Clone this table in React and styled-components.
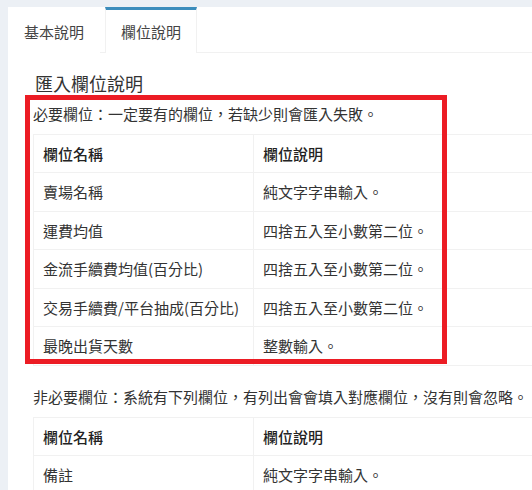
import React, { useState } from 'react';
import styled, { createGlobalStyle } from 'styled-components';

const GlobalStyle = createGlobalStyle`
  html, body {
    margin: 0;
    padding: 0;
    background: #ecf0f5;
  }
  body {
    font-family: "Noto Sans CJK TC", "Noto Sans", sans-serif;
    color: #333;
  }
`;

// the panel is wider than the window, so the page clips it at the edge
const Page = styled.div`
  box-sizing: border-box;
  width: 532px;
  height: 490px;
  overflow: hidden;
  padding: 7px 0 0 8px;
`;

const Panel = styled.div`
  width: 600px;
  min-height: 483px;
  background: #fff;
`;

const TabBar = styled.ul`
  display: flex;
  margin: 0;
  padding: 0;
  list-style: none;
  border-bottom: 1px solid #f1f1f1;
`;

const Tab = styled.li`
  box-sizing: border-box;
  height: 46px;
  margin-right: 5px;
  margin-bottom: -1px;
  padding: 0 15px;
  display: flex;
  align-items: center;
  font-size: 15px;
  line-height: 1;
  cursor: pointer;
  border-top: 3px solid ${(p) => (p.$active ? '#3c8dbc' : 'transparent')};
  border-left: 1px solid ${(p) => (p.$active ? '#f1f1f1' : 'transparent')};
  border-right: 1px solid ${(p) => (p.$active ? '#f1f1f1' : 'transparent')};
  background: #fff;
  color: #444;
`;

const Content = styled.div`
  position: relative;
  padding: 20px 0 20px 25px;
`;

const Title = styled.h3`
  margin: 0 0 10px;
  padding-left: 2px;
  font-size: 18px;
  font-weight: 400;
  line-height: 20px;
  color: #333;
`;

const Note = styled.p`
  margin: 0 0 10px;
  font-size: 15px;
  line-height: 21px;
  white-space: nowrap;
`;

const Table = styled.table`
  width: 540px;
  border-collapse: collapse;
  margin-bottom: 20px;
  font-size: 15px;
  line-height: 1.42857;

  th, td {
    border: 1px solid #f1f1f1;
    padding: 8px 9px;
    text-align: left;
    vertical-align: top;
    white-space: nowrap;
  }
  th {
    font-weight: 500;
    color: #222;
  }
  th:first-child, td:first-child {
    width: 201px;
  }
`;

const Highlight = styled.div`
  position: absolute;
  left: 17px;
  top: 42px;
  width: 422px;
  height: 269px;
  box-sizing: border-box;
  border: 5px solid #ec1c24;
  pointer-events: none;
`;

const required = [
  ['賣場名稱', '純文字字串輸入。'],
  ['運費均值', '四捨五入至小數第二位。'],
  ['金流手續費均值(百分比)', '四捨五入至小數第二位。'],
  ['交易手續費/平台抽成(百分比)', '四捨五入至小數第二位。'],
  ['最晚出貨天數', '整數輸入。'],
];

const optional = [['備註', '純文字字串輸入。']];

const FieldTable = ({ rows }) => (
  <Table>
    <thead>
      <tr>
        <th>欄位名稱</th>
        <th>欄位說明</th>
      </tr>
    </thead>
    <tbody>
      {rows.map(([name, desc]) => (
        <tr key={name}>
          <td>{name}</td>
          <td>{desc}</td>
        </tr>
      ))}
    </tbody>
  </Table>
);

const App = () => {
  const [tab, setTab] = useState(1);
  const tabs = ['基本說明', '欄位說明'];

  return (
    <>
      <GlobalStyle />
      <Page>
        <Panel>
          <TabBar>
            {tabs.map((t, i) => (
              <Tab key={t} $active={tab === i} onClick={() => setTab(i)}>
                {t}
              </Tab>
            ))}
          </TabBar>
          <Content>
            <Title>匯入欄位說明</Title>
            <Note>必要欄位：一定要有的欄位，若缺少則會匯入失敗。</Note>
            <FieldTable rows={required} />
            <Note>非必要欄位：系統有下列欄位，有列出會會填入對應欄位，沒有則會忽略。</Note>
            <FieldTable rows={optional} />
            <Highlight />
          </Content>
        </Panel>
      </Page>
    </>
  );
};

export default App;
